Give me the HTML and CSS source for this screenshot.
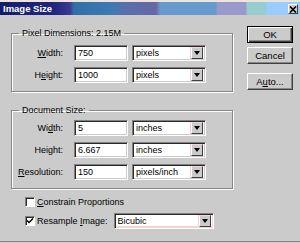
FILE: index.html
```html
<!DOCTYPE html>
<html lang="en">
<head>
    <meta charset="UTF-8">
    <title>Image Size</title>
    <link rel="stylesheet" href="styles.css">
</head>
<body>
    <div class="dialog">
        <div class="titlebar">
            <span class="title">Image Size</span>
            <span class="close">
                <svg width="8" height="7" viewBox="0 0 8 7"><path d="M1 0.5 L7 6.5 M7 0.5 L1 6.5" stroke="#000" stroke-width="1.6"/></svg>
            </span>
        </div>

        <div class="client">
            <div class="main">
                <fieldset class="group">
                    <legend>Pixel Dimensions: 2.15M</legend>
                    <div class="row">
                        <span class="lbl"><u>W</u>idth:</span>
                        <div class="field">750</div>
                        <div class="select"><span>pixels</span><i class="arrow"></i></div>
                    </div>
                    <div class="row">
                        <span class="lbl">H<u>e</u>ight:</span>
                        <div class="field">1000</div>
                        <div class="select"><span>pixels</span><i class="arrow"></i></div>
                    </div>
                </fieldset>

                <fieldset class="group doc">
                    <legend>Document Size:</legend>
                    <div class="row">
                        <span class="lbl">Wi<u>d</u>th:</span>
                        <div class="field">5</div>
                        <div class="select"><span>inches</span><i class="arrow"></i></div>
                    </div>
                    <div class="row">
                        <span class="lbl">Hei<u>g</u>ht:</span>
                        <div class="field">6.667</div>
                        <div class="select"><span>inches</span><i class="arrow"></i></div>
                    </div>
                    <div class="row">
                        <span class="lbl"><u>R</u>esolution:</span>
                        <div class="field">150</div>
                        <div class="select"><span>pixels/inch</span><i class="arrow"></i></div>
                    </div>
                </fieldset>

                <div class="check-row first">
                    <span class="box"></span>
                    <span><u>C</u>onstrain Proportions</span>
                </div>
                <div class="check-row">
                    <span class="box">
                        <svg width="8" height="8" viewBox="0 0 8 8"><path d="M1 3.5 L3 5.5 L7 1.5" stroke="#000" stroke-width="1.5" fill="none"/></svg>
                    </span>
                    <span>Resample <u>I</u>mage:</span>
                    <div class="select wide"><span>Bicubic</span><i class="arrow"></i></div>
                </div>
            </div>

            <div class="buttons">
                <div class="btn default"><span>OK</span></div>
                <div class="btn"><span>Cancel</span></div>
                <div class="btn auto"><span>A<u>u</u>to...</span></div>
            </div>
        </div>
    </div>
</body>
</html>
```

FILE: styles.css
```css
body {
    margin: 0;
    background-color: #cbcbcb;
    font-family: "Liberation Sans", Arial, sans-serif;
    font-size: 9px;
    color: #000;
}

.dialog {
    width: 300px;
    height: 242px;
    box-sizing: border-box;
    border-top: 2px solid #eee4de;
    border-bottom: 1px solid #858585;
    background-color: #cbcbcb;
    display: flex;
    flex-direction: column;
}

/* title bar, the odd colour blocks come from the original capture */
.titlebar {
    height: 13px;
    display: flex;
    justify-content: space-between;
    align-items: center;
    padding: 0 2px 0 3px;
    background: linear-gradient(to right,
        #131c6a 0, #22277e 55px, #3a3a92 70px,
        #2f6fa8 74px, #3d7ab4 112px, #5870ac 124px, #6767a6 156px,
        #6699cc 160px, #6699cc 216px,
        #9999cc 217px, #9999cc 246px,
        #99cccc 247px, #99cccc 266px,
        #99ccff 267px);
}

.title {
    color: #fff;
    font-weight: bold;
    font-size: 9.5px;
    line-height: 13px;
}

.close {
    width: 8px;
    height: 8px;
    margin-top: 1px;
    display: flex;
    align-items: center;
    justify-content: center;
    background: #cbcbcb;
    border: 1px solid;
    border-color: #fff #404040 #404040 #fff;
}

.client {
    display: flex;
    padding-left: 11px;
}

.main {
    width: 222px;
    padding-top: 12px;
}

.group {
    margin: 0;
    padding: 6px 0 8px 0;
    border: 1px solid #878787;
    box-shadow: 1px 1px 0 #fff, inset 1px 1px 0 #fff;
    min-inline-size: 0;
}

.group.doc {
    margin-top: 12px;
    padding-top: 4px;
}

.group legend {
    margin-left: 7px;
    padding: 0 3px;
    font-size: 9px;
    line-height: 12px;
}

.row {
    display: flex;
    align-items: center;
    height: 16px;
}

.row + .row {
    margin-top: 6px;
}

.lbl {
    width: 51px;
    margin-right: 11px;
    text-align: right;
}

.field,
.select {
    height: 16px;
    box-sizing: border-box;
    background: #fff;
    border: 1px solid;
    border-color: #808080 #fff #fff #808080;
    box-shadow: inset 1px 1px 0 #2a2a2a, inset -1px -1px 0 #cbcbcb;
    display: flex;
    align-items: center;
    padding-left: 3px;
}

.field {
    width: 54px;
    margin-right: 4px;
}

.select {
    width: 74px;
    padding-right: 2px;
    justify-content: space-between;
}

.select.wide {
    width: 100px;
    margin-left: 6px;
    box-shadow: inset 1px 1px 0 #2a2a2a, inset -1px -2px 0 #f6d2d2;
}

.arrow {
    width: 10px;
    height: 10px;
    background: #cbcbcb;
    border: 1px solid;
    border-color: #f2d4d4 #404040 #404040 #fff;
    box-shadow: -1px 0 0 #f6d0d0;
    display: flex;
    align-items: center;
    justify-content: center;
}

.arrow::after {
    content: "";
    border-left: 3px solid transparent;
    border-right: 3px solid transparent;
    border-top: 4px solid #000;
}

.check-row {
    display: flex;
    align-items: center;
    height: 16px;
    padding-left: 14px;
    margin-top: 3px;
}

.check-row.first {
    margin-top: 5px;
}

.box {
    width: 10px;
    height: 10px;
    box-sizing: border-box;
    margin-right: 2px;
    background: #fff;
    border: 1px solid;
    border-color: #808080 #fff #fff #808080;
    box-shadow: inset 1px 1px 0 #2a2a2a;
    display: flex;
    align-items: center;
    justify-content: center;
}

.buttons {
    margin-left: 14px;
    padding-top: 11px;
    display: flex;
    flex-direction: column;
}

.btn {
    width: 46px;
    height: 17px;
    box-sizing: border-box;
    border: 1px solid;
    border-color: #fff #404040 #404040 #fff;
    box-shadow: inset -1px -1px 0 #878787;
    display: flex;
    align-items: center;
    justify-content: center;
    font-size: 9.5px;
    margin-bottom: 4px;
}

.btn.default {
    border: 1px solid #000;
    box-shadow: inset 1px 1px 0 #fff, inset -1px -1px 0 #404040, inset -2px -2px 0 #878787;
}

.btn.auto {
    margin-top: 5px;
}
```
